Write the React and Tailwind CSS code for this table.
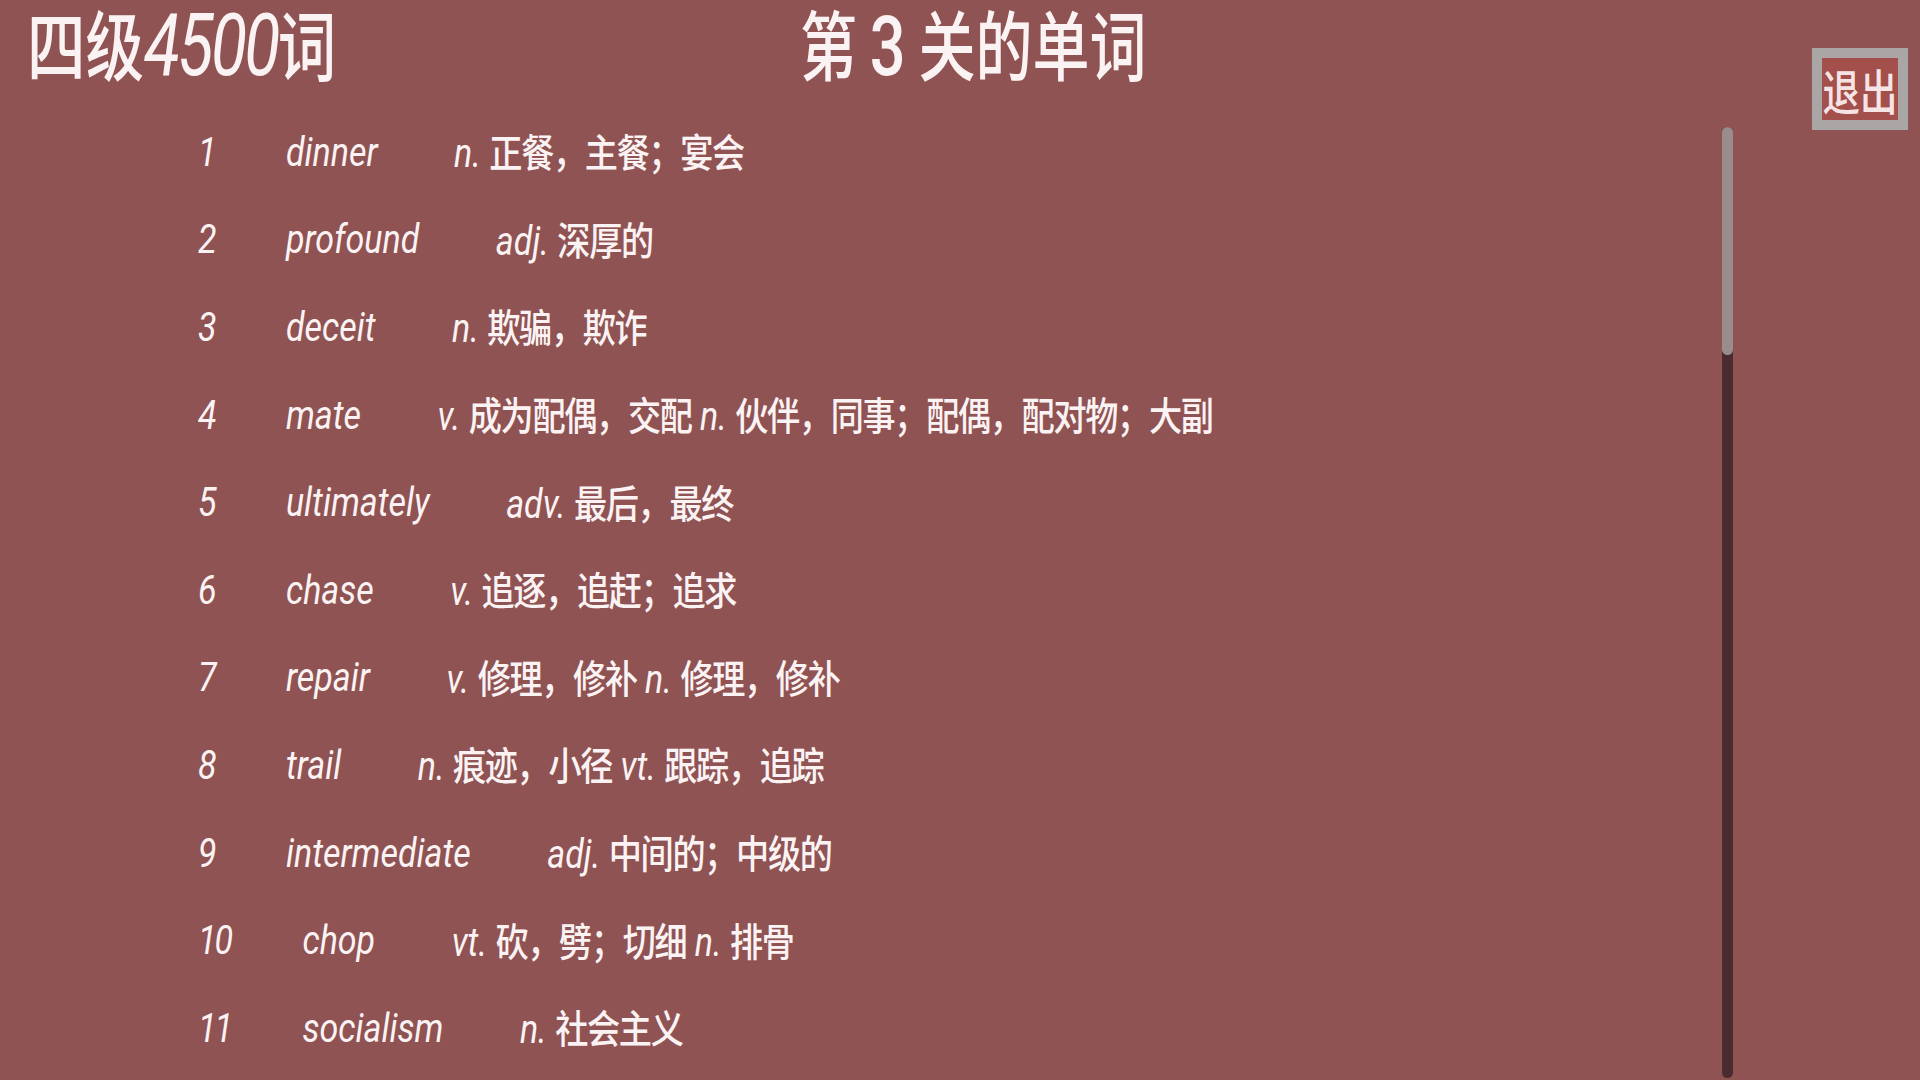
import React from "react";

const words = [
  ["1", "dinner", "n. 正餐，主餐；宴会"],
  ["2", "profound", "adj. 深厚的"],
  ["3", "deceit", "n. 欺骗，欺诈"],
  ["4", "mate", "v. 成为配偶，交配 n. 伙伴，同事；配偶，配对物；大副"],
  ["5", "ultimately", "adv. 最后，最终"],
  ["6", "chase", "v. 追逐，追赶；追求"],
  ["7", "repair", "v. 修理，修补 n. 修理，修补"],
  ["8", "trail", "n. 痕迹，小径 vt. 跟踪，追踪"],
  ["9", "intermediate", "adj. 中间的；中级的"],
  ["10", "chop", "vt. 砍，劈；切细 n. 排骨"],
  ["11", "socialism", "n. 社会主义"],
];

function Mixed({ text }) {
  const parts = text.match(/[\x00-\x7F]+|[^\x00-\x7F]+/g) || [];
  return (
    <span>
      {parts.map((p, i) =>
        /^[\x00-\x7F]+$/.test(p) ? (
          <span key={i} className="italic font-['Roboto',sans-serif] text-[40px] whitespace-pre">
            {p}
          </span>
        ) : (
          <span key={i} className="not-italic font-['Noto_Sans_CJK_SC',sans-serif] text-[39px] tracking-[-0.04em] font-medium">
            {p}
          </span>
        )
      )}
    </span>
  );
}

export default function App() {
  return (
    <div className="w-[1920px] h-[1080px] overflow-hidden bg-[#905353] text-[#fbf3f3] flex">
      <div className="w-[1722px] flex flex-col">
        <div className="h-[109px] flex items-start pt-[2px]">
          <div className="w-[800px] pl-[27px]">
            <div className="inline-block whitespace-nowrap leading-[80px] scale-x-[0.77] origin-left">
              <span className="inline-block font-['Noto_Sans_CJK_SC',sans-serif] text-[76px] leading-[80px] font-medium">四级</span>
              <span className="inline-block font-['Roboto',sans-serif] italic text-[86px] leading-[80px] tracking-[-0.04em]">4500</span>
              <span className="inline-block font-['Noto_Sans_CJK_SC',sans-serif] text-[76px] leading-[80px] font-medium">词</span>
            </div>
          </div>
          <div className="inline-block whitespace-nowrap leading-[80px] scale-x-[0.75] origin-left">
            <span className="inline-block font-['Noto_Sans_CJK_SC',sans-serif] text-[76px] leading-[80px] font-medium whitespace-pre">第 </span>
            <span className="inline-block font-['Roboto',sans-serif] text-[84px] leading-[80px] font-medium">3</span>
            <span className="inline-block font-['Noto_Sans_CJK_SC',sans-serif] text-[76px] leading-[80px] font-medium whitespace-pre"> 关的单词</span>
          </div>
        </div>
        <div className="flex flex-col pl-[198px]">
          {words.map(([n, w, m]) => (
            <div key={n} className="h-[87.6px] flex items-center">
              <div className="flex items-center whitespace-nowrap scale-x-[0.85] origin-left leading-none">
                <span className="italic font-['Roboto',sans-serif] text-[40px] tracking-[-0.06em] mr-[84px]">{n}</span>
                <span className="italic font-['Roboto',sans-serif] text-[40px] mr-[90px]">{w}</span>
                <Mixed text={m} />
              </div>
            </div>
          ))}
        </div>
      </div>
      <div className="w-[11px] pt-[127px] pb-[2px] flex flex-col">
        <div className="flex-1 rounded-full bg-[#4a2c2e] flex flex-col">
          <div className="h-[228px] rounded-full bg-[#9a8c8c]"></div>
        </div>
      </div>
      <div className="flex-1 pl-[79px] pt-[48px]">
        <div className="w-[96px] h-[82px] border-[10px] border-[#aaa6a6] bg-[#a34f4b] flex items-center justify-center overflow-hidden">
          <span className="inline-block whitespace-nowrap scale-x-[0.78] font-['Noto_Sans_CJK_SC',sans-serif] text-[48px] leading-none text-[#f6e4e4] font-medium">
            退出
          </span>
        </div>
      </div>
    </div>
  );
}
